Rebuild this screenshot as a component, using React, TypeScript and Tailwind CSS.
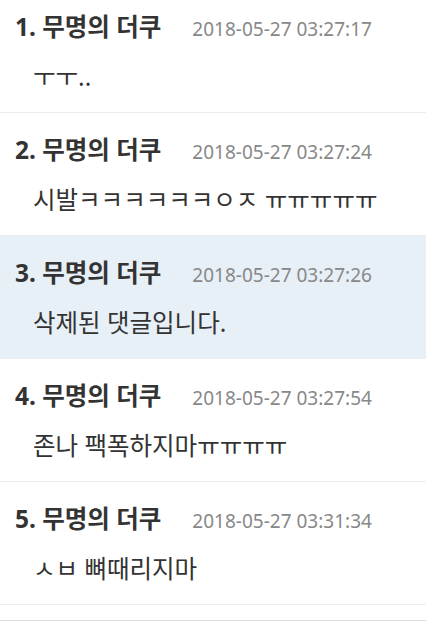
import React from 'react';

interface Comment {
  id: number;
  author: string;
  date: string;
  body: string;
  deleted?: boolean;
}

const comments: Comment[] = [
  { id: 1, author: '무명의 더쿠', date: '2018-05-27 03:27:17', body: 'ㅜㅜ..' },
  { id: 2, author: '무명의 더쿠', date: '2018-05-27 03:27:24', body: '시발ㅋㅋㅋㅋㅋㅋㅇㅈ ㅠㅠㅠㅠㅠ' },
  { id: 3, author: '무명의 더쿠', date: '2018-05-27 03:27:26', body: '삭제된 댓글입니다.', deleted: true },
  { id: 4, author: '무명의 더쿠', date: '2018-05-27 03:27:54', body: '존나 팩폭하지마ㅠㅠㅠㅠ' },
  { id: 5, author: '무명의 더쿠', date: '2018-05-27 03:31:34', body: 'ㅅㅂ 뼈때리지마' },
];

const App = () => {
  return (
    <div className="bg-white h-[623px] overflow-hidden font-['Noto_Sans','Noto_Sans_CJK_KR',sans-serif] text-[#333]">
      <ul className="-mt-[10px]">
        {comments.map((c) => (
          <li
            key={c.id}
            className={`h-[123px] border-b border-[#ececec] pl-[15px] pt-[22px] ${c.deleted ? 'bg-[#e7eff7]' : 'bg-white'}`}
          >
            <div className="flex items-baseline h-[30px] leading-[30px]">
              <span className="text-[24.5px] font-bold">
                {c.id}. {c.author}
              </span>
              <span className="ml-[31px] text-[19px] text-[#888]">{c.date}</span>
            </div>
            <p className="mt-[20px] pl-[18px] text-[24.5px] leading-[30px]">{c.body}</p>
          </li>
        ))}
      </ul>
      <div className="h-[16px] border-b border-[#dedede]" />
    </div>
  );
};

export default App;
